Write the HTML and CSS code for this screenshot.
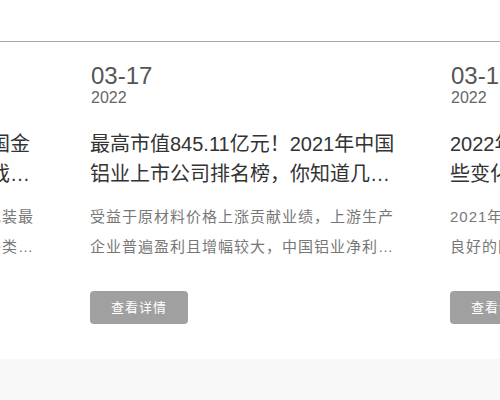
FILE: index.html
```html
<!DOCTYPE html>
<html lang="zh-CN">
<head>
<meta charset="utf-8">
<title>新闻动态</title>
<link rel="stylesheet" href="styles.css">
</head>
<body>
<div class="page">
  <div class="topbar"></div>
  <section class="news">
    <div class="track">
      <article class="card">
        <div class="date">
          <div class="md">03-17</div>
          <div class="yr">2022</div>
        </div>
        <h3 class="title">
          <span class="line">铝加工行业转型升级，打造中国金</span>
          <span class="line">字招牌的关键一步，看这场游戏…</span>
        </h3>
        <p class="desc">
          <span class="line">铝箔作为新型包装材料，被誉为绿色包装最</span>
          <span class="line">理想材料，广泛应用于食品、药品等各类…</span>
        </p>
        <a class="more" href="#">查看详情</a>
      </article>
      <article class="card">
        <div class="date">
          <div class="md">03-17</div>
          <div class="yr">2022</div>
        </div>
        <h3 class="title">
          <span class="line">最高市值845.11亿元！2021年中国</span>
          <span class="line">铝业上市公司排名榜，你知道几…</span>
        </h3>
        <p class="desc">
          <span class="line">受益于原材料价格上涨贡献业绩，上游生产</span>
          <span class="line">企业普遍盈利且增幅较大，中国铝业净利…</span>
        </p>
        <a class="more" href="#">查看详情</a>
      </article>
      <article class="card">
        <div class="date">
          <div class="md">03-17</div>
          <div class="yr">2022</div>
        </div>
        <h3 class="title">
          <span class="line">2022年铝加工行业将会发生哪</span>
          <span class="line">些变化？企业应该如何应对…</span>
        </h3>
        <p class="desc">
          <span class="line">2021年，铝行业整体运行态势</span>
          <span class="line">良好的同时，也面临诸多挑战…</span>
        </p>
        <a class="more" href="#">查看详情</a>
      </article>
    </div>
  </section>
  <div class="footer"></div>
</div>
</body>
</html>
```

FILE: styles.css
```css
html, body {
  margin: 0;
  padding: 0;
  background: #ffffff;
}
body {
  width: 500px;
  height: 400px;
  overflow: hidden;
  font-family: "Liberation Sans", "Noto Sans CJK SC", sans-serif;
}
.page {
  display: flex;
  flex-direction: column;
  height: 400px;
}
.topbar {
  height: 41px;
  border-bottom: 1px solid #a9a9a9;
  flex: none;
}
.news {
  flex: none;
  overflow: hidden;
  padding: 22px 0 35px;
}
.track {
  display: flex;
  gap: 50px;
  margin-left: -270px;
}
.card {
  flex: none;
  width: 310px;
  display: flex;
  flex-direction: column;
  align-items: flex-start;
}
.date {
  padding-left: 1px;
}
.md {
  font-size: 24px;
  line-height: 24px;
  color: #555555;
}
.yr {
  margin-top: 2px;
  font-size: 16px;
  line-height: 16px;
  color: #666666;
}
.title {
  margin: 23px 0 0;
  font-weight: normal;
  font-size: 20px;
  color: #333333;
}
.line {
  display: block;
  white-space: nowrap;
  overflow: hidden;
}
.title .line {
  height: 30px;
  line-height: 30px;
}
.desc {
  margin: 13px 0 0;
  font-size: 15px;
  letter-spacing: 1px;
  color: #777777;
}
.desc .line {
  height: 30px;
  line-height: 30px;
}
.more {
  margin-top: 29px;
  width: 98px;
  height: 33px;
  line-height: 33px;
  border-radius: 4px;
  background: #a0a0a0;
  color: #ffffff;
  font-size: 13px;
  text-align: center;
  text-decoration: none;
  letter-spacing: 1px;
}
.footer {
  flex: 1;
  background: #f8f8f8;
}
```
